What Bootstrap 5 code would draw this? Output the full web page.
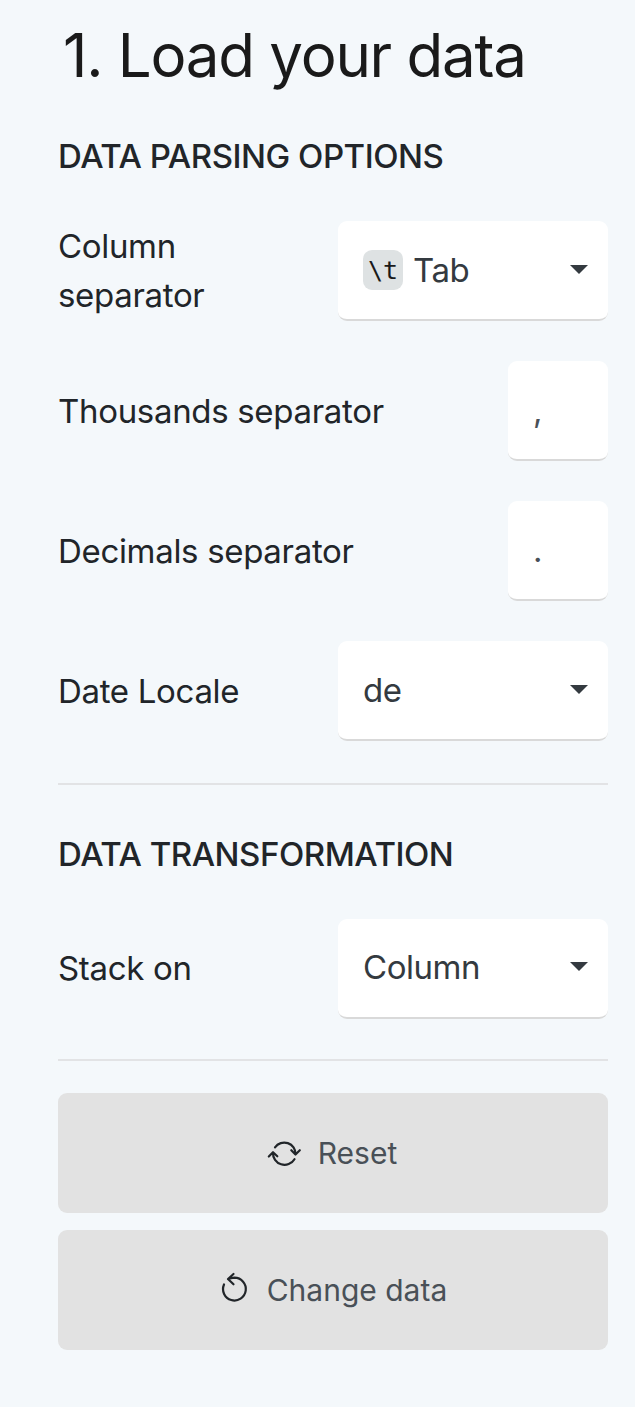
<!DOCTYPE html>
<html lang="en">
<head>
<meta charset="utf-8">
<meta name="viewport" content="width=device-width, initial-scale=1">
<title>Load your data</title>
<link rel="stylesheet" href="https://cdn.jsdelivr.net/npm/bootstrap@5.3.0/dist/css/bootstrap.min.css">
<style>
body{background:#f4f8fb;color:#212529;font-family:Inter,sans-serif;font-size:33px;line-height:49px;letter-spacing:-.32px}
.panel{padding:19px 27px 0 58px}
.step-title{font-size:60px;line-height:72px;font-weight:400;color:#1a1a1a;margin:0 0 45px 5px;letter-spacing:-1.25px;white-space:nowrap}
.section-title{font-size:33px;line-height:40px;font-weight:500;margin:0 0 45px;text-transform:uppercase;letter-spacing:-.47px;white-space:nowrap}
.rule + section .section-title{margin-top:49px}
.option{height:100px;margin-bottom:40px}
.option-name{white-space:nowrap}
.field,.field:hover,.field:focus{width:270px;height:100px;background:#fff;color:#343a40;border:0;border-bottom:2px solid #d9d9d9;border-radius:9px;font-size:33px;line-height:49px;letter-spacing:-.45px;padding:0 20px 0 25px}
.field.dropdown-toggle::after{margin:-1px 0 0;border-top:9px solid;border-right:9px solid transparent;border-left:9px solid transparent;border-bottom:0}
.short-field,.short-field:focus{width:100px;color:#495057;outline:0}
.stacking .option-name,.stacking .field > span{padding-bottom:2px}
.stacking .field.dropdown-toggle::after{margin-top:-3px}
.key{width:40px;height:40px;border-radius:9px;background:#dee2e3;color:#1a1a1a;font:25px/42px "DejaVu Sans Mono",monospace;letter-spacing:0;margin-right:10px}
.rule{height:2px;background:#e2e3e5}
.action,.action:hover{height:120px;background:#e2e2e2;color:#495057;border:0;border-radius:9px;font-size:30px;letter-spacing:0}
.action svg{fill:none;stroke:#212529;stroke-width:2.2;stroke-linecap:round;stroke-linejoin:round;overflow:visible}
.icon-undo{margin-bottom:6px}
</style>
</head>
<body>
<main class="panel">
  <h1 class="step-title">1. Load your data</h1>
  <section>
    <h2 class="section-title">Data parsing options</h2>
    <div class="option d-flex align-items-center justify-content-between">
      <span>Column<br>separator</span>
      <button class="field btn dropdown-toggle d-flex align-items-center justify-content-between" type="button"><span class="d-flex align-items-center"><span class="key text-center">\t</span><span>Tab</span></span></button>
    </div>
    <div class="option d-flex align-items-center justify-content-between">
      <label class="option-name" for="thousands">Thousands separator</label>
      <input class="field short-field" id="thousands" value=",">
    </div>
    <div class="option d-flex align-items-center justify-content-between">
      <label class="option-name" for="decimals">Decimals separator</label>
      <input class="field short-field" id="decimals" value=".">
    </div>
    <div class="option d-flex align-items-center justify-content-between">
      <span class="option-name">Date Locale</span>
      <button class="field btn dropdown-toggle d-flex align-items-center justify-content-between" type="button"><span>de</span></button>
    </div>
  </section>
  <div class="rule" style="margin-top:42px"></div>
  <section class="stacking">
    <h2 class="section-title">Data transformation</h2>
    <div class="option d-flex align-items-center justify-content-between">
      <span class="option-name">Stack on</span>
      <button class="field btn dropdown-toggle d-flex align-items-center justify-content-between" type="button"><span>Column</span></button>
    </div>
  </section>
  <div class="rule"></div>
  <div class="d-grid" style="gap:17px;margin-top:32px">
    <button class="action btn d-flex align-items-center justify-content-center" type="button">
      <svg width="34" height="26" viewBox="0 0 34 26" style="margin:0 17px 0 -2px"><path d="M8 7.3A11.3 11.3 0 0 1 28.5 14.3M24.3 10.2L28.5 14.5 32.8 10.2M27.5 19.2A11.6 11.6 0 0 1 6 12.5M1.8 16.5L6 12.2 10.3 16.3"/></svg>
      <span>Reset</span>
    </button>
    <button class="action btn d-flex align-items-center justify-content-center" type="button">
      <svg class="icon-undo" width="26" height="30" viewBox="0 0 26 30" style="margin-left:2px;margin-right:20px"><path d="M3 12.5A11.4 11.4 0 1 0 13.5 5.7Q10 5.9 7 7M12.5 2L7 7 12.5 12.3"/></svg>
      <span>Change data</span>
    </button>
  </div>
</main>
<script src="https://cdn.jsdelivr.net/npm/bootstrap@5.3.0/dist/js/bootstrap.bundle.min.js"></script>
</body>
</html>
